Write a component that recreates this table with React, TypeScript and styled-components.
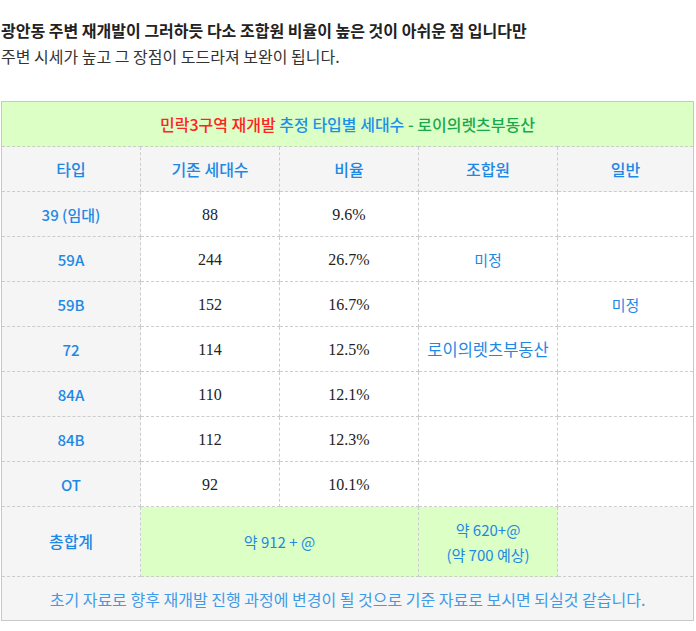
import React from "react";
import styled, { createGlobalStyle } from "styled-components";

const GlobalStyle = createGlobalStyle`
    body {
        margin: 0;
        background: #fff;
        font-family: "Noto Sans CJK KR", "Noto Sans", sans-serif;
    }
`;

const Page = styled.div`
    padding: 17px 1px 0 1px;
    width: 694px;
`;

const Intro = styled.div`
    font-size: 16px;
    line-height: 26px;
    color: #333;
    margin-bottom: 32px;
`;

const Lead = styled.div`
    font-weight: 700;
    color: #222;
`;

const Table = styled.table`
    width: 693px;
    border-collapse: collapse;
    border: 1px solid #c8c8c8;
    table-layout: fixed;
    font-size: 15px;
`;

const TitleCell = styled.td`
    height: 44px;
    padding: 0;
    background: #dbffc4;
    text-align: center;
    font-size: 16px;
    font-weight: 500;
    line-height: 22px;
    border-bottom: 1px dashed #ccc;
`;

const Span = styled.span<{ $color: string }>`
    color: ${(p) => p.$color};
`;

const Cell = styled.td<{ $bg?: string; $head?: boolean; $num?: boolean; $h?: number; $size?: number }>`
    height: ${(p) => p.$h ?? 44}px;
    padding: 0;
    text-align: center;
    border: 1px dashed #ccc;
    background: ${(p) => p.$bg ?? "#fff"};
    color: ${(p) => (p.$num ? "#222" : "#1e88e5")};
    font-size: ${(p) => p.$size ?? (p.$num ? 16 : 15)}px;
    font-weight: ${(p) => (p.$head ? 500 : 400)};
    font-family: ${(p) =>
        p.$num ? `"Liberation Serif", "Noto Sans CJK KR", serif` : `"Noto Sans CJK KR", "Noto Sans", sans-serif`};
    line-height: 25px;
`;

const Footer = styled.td`
    height: 43px;
    padding: 0;
    background: #f5f5f5;
    text-align: center;
    font-size: 16px;
    line-height: 22px;
    color: #3f9be8;
    border-top: 1px dashed #ccc;
`;

const GRAY = "#f5f5f5";
const GREEN = "#dbffc4";

const rows = [
    { type: "39 (임대)", count: "88", ratio: "9.6%", member: "", general: "" },
    { type: "59A", count: "244", ratio: "26.7%", member: "미정", general: "" },
    { type: "59B", count: "152", ratio: "16.7%", member: "", general: "미정" },
    { type: "72", count: "114", ratio: "12.5%", member: "로이의렛츠부동산", general: "" },
    { type: "84A", count: "110", ratio: "12.1%", member: "", general: "" },
    { type: "84B", count: "112", ratio: "12.3%", member: "", general: "" },
    { type: "OT", count: "92", ratio: "10.1%", member: "", general: "" },
];

export default function App() {
    return (
        <>
            <GlobalStyle />
            <Page>
                <Intro>
                    <Lead>광안동 주변 재개발이 그러하듯 다소 조합원 비율이 높은 것이 아쉬운 점 입니다만</Lead>
                    <div>주변 시세가 높고 그 장점이 도드라져 보완이 됩니다.</div>
                </Intro>
                <Table>
                    <colgroup>
                        <col style={{ width: 139 }} />
                        <col style={{ width: 139 }} />
                        <col style={{ width: 139 }} />
                        <col style={{ width: 139 }} />
                        <col />
                    </colgroup>
                    <tbody>
                        <tr>
                            <TitleCell colSpan={5}>
                                <Span $color="#ff2424">민락3구역 재개발 </Span>
                                <Span $color="#1e8fe6">추정 타입별 세대수 </Span>
                                <Span $color="#1aa84e">- 로이의렛츠부동산</Span>
                            </TitleCell>
                        </tr>
                        <tr>
                            {["타입", "기존 세대수", "비율", "조합원", "일반"].map((h) => (
                                <Cell key={h} $bg={GRAY} $head $size={16}>
                                    {h}
                                </Cell>
                            ))}
                        </tr>
                        {rows.map((r) => (
                            <tr key={r.type}>
                                <Cell $bg={GRAY} $head>
                                    {r.type}
                                </Cell>
                                <Cell $num>{r.count}</Cell>
                                <Cell $num>{r.ratio}</Cell>
                                <Cell $size={r.member.length > 2 ? 16.5 : 15}>{r.member}</Cell>
                                <Cell>{r.general}</Cell>
                            </tr>
                        ))}
                        <tr>
                            <Cell $bg={GRAY} $head $h={69} $size={16}>
                                총합계
                            </Cell>
                            <Cell $bg={GREEN} colSpan={2} $h={69}>
                                약 912 + @
                            </Cell>
                            <Cell $bg={GREEN} $h={69}>
                                약 620+@
                                <br />
                                (약 700 예상)
                            </Cell>
                            <Cell $bg={GRAY} $h={69} />
                        </tr>
                        <tr>
                            <Footer colSpan={5}>
                                초기 자료로 향후 재개발 진행 과정에 변경이 될 것으로 기준 자료로 보시면 되실것 같습니다.
                            </Footer>
                        </tr>
                    </tbody>
                </Table>
            </Page>
        </>
    );
}
